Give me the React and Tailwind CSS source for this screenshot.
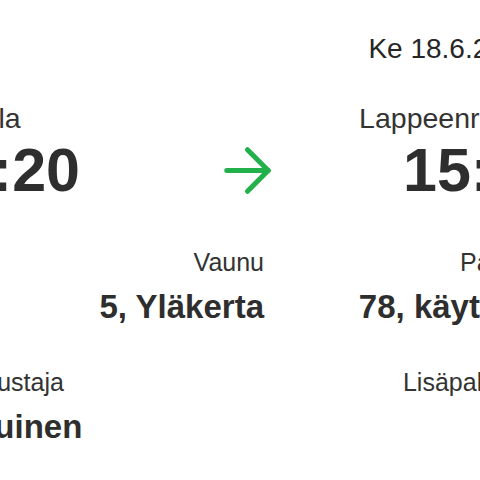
import React from "react";

const ArrowIcon = () => (
  <svg
    className="ml-[12px]"
    width="71"
    height="71"
    viewBox="0 0 24 24"
    fill="none"
    stroke="#22b04b"
    strokeWidth="1.7"
    strokeLinecap="round"
    strokeLinejoin="round"
  >
    <path d="M5 12h14" />
    <path d="m12 5 7 7-7 7" />
  </svg>
);

const Detail = ({ label, value, className = "" }) => (
  <div className={className}>
    <div className="text-[25px] leading-[30px] text-[#333]">{label}</div>
    <div className="mt-[12px] text-[33px] leading-[36px] font-bold text-[#2e2e2e]">
      {value}
    </div>
  </div>
);

export default function App() {
  return (
    <div
      className="w-[480px] h-[480px] overflow-hidden bg-white"
      style={{ fontFamily: "'Liberation Sans', Arial, sans-serif" }}
    >
      <div className="ml-[-57px] w-[592px]">
        {/* date */}
        <div className="mt-[33px] text-right text-[28px] leading-[32px] text-[#262626]">
          Ke 18.6.2025
        </div>

        {/* stations */}
        <div className="mt-[37px] flex justify-between text-[28.5px] leading-[32px] text-[#333]">
          <span>Pasila</span>
          <span>Lappeenranta</span>
        </div>

        {/* times */}
        <div className="mt-[6px] ml-[-19px] mr-[-24px] h-[61px] flex items-center justify-between text-[61px] leading-[61px] font-bold text-[#2e2e2e]">
          <span>13:20</span>
          <ArrowIcon />
          <span>15:44</span>
        </div>

        {/* wagon & seat */}
        <div className="mt-[46px] flex">
          <Detail className="w-[321px] text-right" label="Vaunu" value="5, Yläkerta" />
          <Detail className="flex-1 text-right" label="Paikka" value="78, käytävä" />
        </div>

        {/* passenger & extras */}
        <div className="mt-[42px] flex justify-between">
          <Detail label="Matkustaja" value="Aikuinen" />
          <Detail className="text-right" label="Lisäpalvelut" value="Ei" />
        </div>
      </div>
    </div>
  );
}
